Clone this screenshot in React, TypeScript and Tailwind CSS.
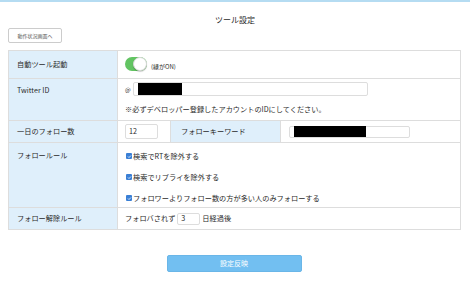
import React from "react";

const font = { fontFamily: '"Noto Sans CJK JP", "Noto Sans", sans-serif' };

function Toggle() {
  return (
    <div className="relative w-[22px] h-[14px] rounded-full bg-[#62c462]">
      <div className="absolute right-0 top-0 w-[14px] h-[14px] rounded-full bg-white border border-[#d8d8d8] shadow-[0_1px_1px_rgba(0,0,0,0.2)]" />
    </div>
  );
}

function Check({ label }: { label: string }) {
  return (
    <div className="flex items-center gap-[1px] h-[12px]">
      <span className="w-[6px] h-[6px] rounded-[1px] bg-[#3a7fd5] flex items-center justify-center">
        <svg width="5" height="5" viewBox="0 0 10 10">
          <path d="M2 5 L4 7 L8 3" stroke="white" strokeWidth="1.6" fill="none" />
        </svg>
      </span>
      <span>{label}</span>
    </div>
  );
}

export default function App() {
  return (
    <div className="w-[470px] h-[282px] bg-white text-[#2a2a2a] border-t-2 border-[#b5dcf2]" style={font}>
      <div className="h-[26px] flex items-center justify-center text-[8px] pt-[9px]">ツール設定</div>
      <div className="px-[8px]">
        <div className="w-[54px] h-[15px] border border-[#ccc] rounded-[2px] flex items-center justify-center text-[5px] text-[#555] bg-white">
          動作状況画面へ
        </div>
      </div>
      <div className="px-[8px] mt-[7px]">
        <table className="w-[452px] table-fixed border-collapse text-[7.2px] border border-[#ddd]">
          <colgroup>
            <col className="w-[109px]" />
            <col className="w-[53px]" />
            <col className="w-[110px]" />
            <col className="w-[180px]" />
          </colgroup>
          <tbody>
            <tr className="h-[28px]">
              <td className="bg-[#dfeffb] border border-[#ddd] align-top pl-[8px] pt-[8px]">自動ツール起動</td>
              <td colSpan={3} className="border border-[#ddd] align-top pl-[7px] pt-[6px]">
                <div className="flex items-end gap-[4px]">
                  <Toggle />
                  <span className="text-[6px] leading-[8px]">(緑がON)</span>
                </div>
              </td>
            </tr>
            <tr className="h-[42px]">
              <td className="bg-[#dfeffb] border border-[#ddd] align-top pl-[8px] pt-[6px]">Twitter ID</td>
              <td colSpan={3} className="border border-[#ddd] align-top pl-[7px] pt-[3px]">
                <div className="flex items-center gap-[2px]">
                  <span className="text-[6px]">@</span>
                  <div className="w-[235px] h-[14px] border border-[#ddd] rounded-[2px] flex items-center pl-[4px]">
                    <div className="w-[44px] h-[12px] bg-black" />
                  </div>
                </div>
                <div className="mt-[8px] leading-[10px]">※必ずデベロッパー登録したアカウントのIDにしてください。</div>
              </td>
            </tr>
            <tr className="h-[22px]">
              <td className="bg-[#dfeffb] border border-[#ddd] align-middle pl-[8px]">一日のフォロー数</td>
              <td className="border border-[#ddd] align-middle pl-[7px]">
                <div className="w-[33px] h-[15px] border border-[#ddd] rounded-[2px] flex items-center pl-[3px]">12</div>
              </td>
              <td className="bg-[#dfeffb] border border-[#ddd] align-middle pl-[10px]">フォローキーワード</td>
              <td className="border border-[#ddd] align-middle pl-[8px]">
                <div className="w-[121px] h-[12px] border border-[#ddd] rounded-[2px] flex items-center pl-[4px]">
                  <div className="w-[72px] h-[11px] bg-black" />
                </div>
              </td>
            </tr>
            <tr className="h-[65px]">
              <td className="bg-[#dfeffb] border border-[#ddd] align-top pl-[8px] pt-[7px]">フォロールール</td>
              <td colSpan={3} className="border border-[#ddd] align-top pl-[8px] pt-[7px]">
                <div className="flex flex-col gap-[9px]">
                  <Check label="検索でRTを除外する" />
                  <Check label="検索でリプライを除外する" />
                  <Check label="フォロワーよりフォロー数の方が多い人のみフォローする" />
                </div>
              </td>
            </tr>
            <tr className="h-[22px]">
              <td className="bg-[#dfeffb] border border-[#ddd] align-middle pl-[8px]">フォロー解除ルール</td>
              <td colSpan={3} className="border border-[#ddd] align-middle pl-[7px]">
                <div className="flex items-center gap-[2px]">
                  <span>フォロバされず</span>
                  <div className="w-[23px] h-[12px] border border-[#ddd] rounded-[2px] flex items-center pl-[3px]">3</div>
                  <span>日経過後</span>
                </div>
              </td>
            </tr>
          </tbody>
        </table>
      </div>
      <div className="flex justify-center mt-[25px] pr-[2px]">
        <div className="w-[135px] h-[17px] rounded-[2px] bg-[#72bff1] border border-[#6ab6e8] text-white text-[7px] flex items-center justify-center">
          設定反映
        </div>
      </div>
    </div>
  );
}
